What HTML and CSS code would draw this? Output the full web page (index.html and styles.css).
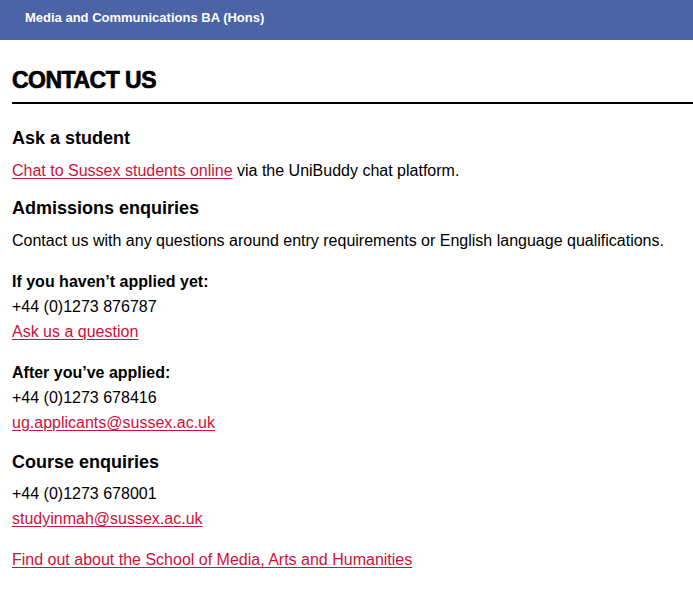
FILE: index.html
```html
<!DOCTYPE html>
<html lang="en">
<head>
<meta charset="utf-8">
<title>Contact us</title>
<link rel="stylesheet" href="styles.css">
</head>
<body>
<header class="topbar">
  <span class="topbar-title">Media and Communications BA (Hons)</span>
</header>
<main class="content">
  <h2 class="section-title">CONTACT US</h2>
  <section class="block">
    <h3 class="block-title">Ask a student</h3>
    <p class="line"><a href="#">Chat to Sussex students online</a> via the UniBuddy chat platform.</p>
  </section>
  <section class="block">
    <h3 class="block-title">Admissions enquiries</h3>
    <p class="line">Contact us with any questions around entry requirements or English language qualifications.</p>
    <div class="group">
      <p class="line strong">If you haven’t applied yet:</p>
      <p class="line">+44 (0)1273 876787</p>
      <p class="line"><a href="#">Ask us a question</a></p>
    </div>
    <div class="group">
      <p class="line strong">After you’ve applied:</p>
      <p class="line">+44 (0)1273 678416</p>
      <p class="line"><a href="#">ug.applicants@sussex.ac.uk</a></p>
    </div>
  </section>
  <section class="block block-last">
    <h3 class="block-title">Course enquiries</h3>
    <p class="line">+44 (0)1273 678001</p>
    <p class="line"><a href="#">studyinmah@sussex.ac.uk</a></p>
    <p class="line footer-link"><a href="#">Find out about the School of Media, Arts and Humanities</a></p>
  </section>
</main>
</body>
</html>
```
FILE: styles.css
```css
html, body {
  margin: 0;
  padding: 0;
  background: #ffffff;
  color: #000000;
  font-family: "Liberation Sans", Arial, sans-serif;
}

.topbar {
  height: 40px;
  background: #4a64a5;
  display: flex;
  align-items: center;
  padding: 0 25px;
  box-sizing: border-box;
}

.topbar-title {
  color: #ffffff;
  font-weight: bold;
  font-size: 13px;
  margin-top: -6px;
}

.content {
  padding: 0 0 0 12px;
}

.section-title {
  margin: 28px 0 0;
  padding-bottom: 10px;
  border-bottom: 2px solid #000;
  font-size: 23px;
  font-weight: 900;
  letter-spacing: -0.5px;
  line-height: 24px;
  -webkit-text-stroke: 0.7px #000;
}

.block-title {
  margin: 0;
  font-size: 18px;
  font-weight: bold;
  line-height: 24px;
}

.section-title + .block {
  margin-top: 22px;
}

.block + .block {
  margin-top: 13px;
}

.block-last {
  padding-top: 2px;
}

.block-title + .line {
  margin-top: 8px;
}

.block-last .block-title + .line {
  margin-top: 7px;
}

.line {
  margin: 0;
  font-size: 16px;
  line-height: 25px;
}

.strong {
  font-weight: bold;
}

.group {
  margin-top: 16px;
}

a {
  color: #d0103a;
  text-decoration: underline;
  text-underline-offset: 2px;
}

.footer-link {
  margin-top: 16px;
}
```
